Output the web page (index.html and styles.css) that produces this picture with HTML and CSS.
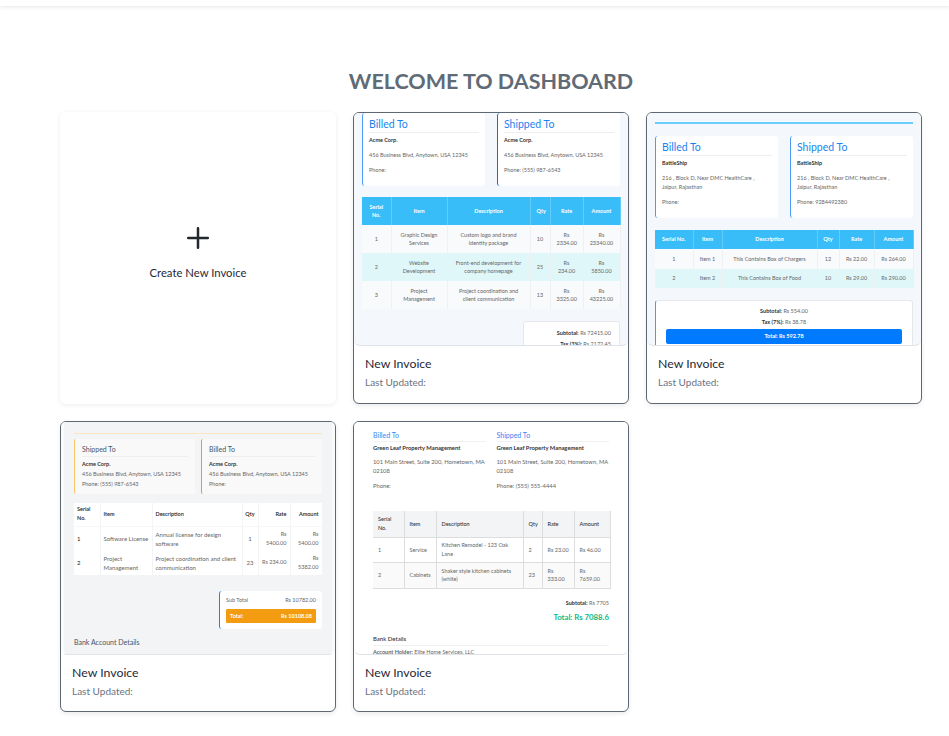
FILE: index.html
```html
<!DOCTYPE html>
<html lang="en">
<head>
  <meta charset="UTF-8">
  <meta name="viewport" content="width=device-width, initial-scale=1.0">
  <title>Dashboard</title>
  <link rel="stylesheet" href="styles.css">
</head>
<body>

  <div class="topbar"></div>

  <main class="dashboard">
    <h1 class="title">WELCOME TO DASHBOARD</h1>

    <div class="grid">

      <a class="create-card">
        <svg class="plus" width="22" height="22" viewBox="0 0 22 22" fill="none" stroke="#23272e" stroke-width="2.5" stroke-linecap="round"><path d="M11 1.2v19.6M1.2 11h19.6"/></svg>
        <span>Create New Invoice</span>
      </a>

      <!-- template 1 -->
      <div class="card">
        <div class="preview t1">
          <div class="parties">
            <div class="party">
              <h3>Billed To</h3>
              <p><b>Acme Corp.</b></p>
              <p>456 Business Blvd, Anytown, USA 12345</p>
              <p>Phone:</p>
            </div>
            <div class="party dark">
              <h3>Shipped To</h3>
              <p><b>Acme Corp.</b></p>
              <p>456 Business Blvd, Anytown, USA 12345</p>
              <p>Phone: (555) 987-6543</p>
            </div>
          </div>
          <table class="items">
            <colgroup><col class="c1"><col class="c2"><col class="c3"><col class="c4"><col class="c5"><col class="c6"></colgroup>
            <thead>
              <tr><th>Serial No.</th><th>Item</th><th>Description</th><th>Qty</th><th>Rate</th><th>Amount</th></tr>
            </thead>
            <tbody>
              <tr><td>1</td><td>Graphic Design Services</td><td>Custom logo and brand identity package</td><td>10</td><td>Rs 2334.00</td><td>Rs 23340.00</td></tr>
              <tr><td>2</td><td>Website Development</td><td>Front-end development for company homepage</td><td>25</td><td>Rs 234.00</td><td>Rs 5850.00</td></tr>
              <tr><td>3</td><td>Project Management</td><td>Project coordination and client communication</td><td>13</td><td>Rs 3325.00</td><td>Rs 43225.00</td></tr>
            </tbody>
          </table>
          <div class="totals">
            <p><b>Subtotal:</b> Rs 72415.00</p>
            <p><b>Tax (3%):</b> Rs 2172.45</p>
          </div>
        </div>
        <div class="card-info">
          <h4>New Invoice</h4>
          <p>Last Updated:</p>
        </div>
      </div>

      <!-- template 2 -->
      <div class="card">
        <div class="preview t2">
          <div class="rule"></div>
          <div class="parties">
            <div class="party">
              <h3>Billed To</h3>
              <p><b>BattleShip</b></p>
              <p>216 , Block D, Near DMC HealthCare , Jaipur, Rajasthan</p>
              <p>Phone:</p>
            </div>
            <div class="party">
              <h3>Shipped To</h3>
              <p><b>BattleShip</b></p>
              <p>216 , Block D, Near DMC HealthCare , Jaipur, Rajasthan</p>
              <p>Phone: 9284492380</p>
            </div>
          </div>
          <table class="items">
            <colgroup><col class="c1"><col class="c2"><col class="c3"><col class="c4"><col class="c5"><col class="c6"></colgroup>
            <thead>
              <tr><th>Serial No.</th><th>Item</th><th>Description</th><th>Qty</th><th>Rate</th><th>Amount</th></tr>
            </thead>
            <tbody>
              <tr><td>1</td><td>Item 1</td><td>This Contains Box of Chargers</td><td>12</td><td>Rs 22.00</td><td>Rs 264.00</td></tr>
              <tr><td>2</td><td>Item 2</td><td>This Contains Box of Food</td><td>10</td><td>Rs 29.00</td><td>Rs 290.00</td></tr>
            </tbody>
          </table>
          <div class="totals">
            <p><b>Subtotal:</b> Rs 554.00</p>
            <p><b>Tax (7%):</b> Rs 38.78</p>
            <div class="grand">Total: Rs 592.78</div>
          </div>
        </div>
        <div class="card-info">
          <h4>New Invoice</h4>
          <p>Last Updated:</p>
        </div>
      </div>

      <!-- template 3 -->
      <div class="card">
        <div class="preview t3">
          <div class="rule"></div>
          <div class="parties">
            <div class="party light">
              <h3>Shipped To</h3>
              <p><b>Acme Corp.</b></p>
              <p>456 Business Blvd, Anytown, USA 12345</p>
              <p>Phone: (555) 987-6543</p>
            </div>
            <div class="party">
              <h3>Billed To</h3>
              <p><b>Acme Corp.</b></p>
              <p>456 Business Blvd, Anytown, USA 12345</p>
              <p>Phone:</p>
            </div>
          </div>
          <table class="items">
            <colgroup><col class="c1"><col class="c2"><col class="c3"><col class="c4"><col class="c5"><col class="c6"></colgroup>
            <thead>
              <tr><th>Serial No.</th><th>Item</th><th>Description</th><th>Qty</th><th>Rate</th><th>Amount</th></tr>
            </thead>
            <tbody>
              <tr><td>1</td><td>Software License</td><td>Annual license for design software</td><td>1</td><td>Rs 5400.00</td><td>Rs 5400.00</td></tr>
              <tr><td>2</td><td>Project Management</td><td>Project coordination and client communication</td><td>23</td><td>Rs 234.00</td><td>Rs 5382.00</td></tr>
            </tbody>
          </table>
          <div class="totals">
            <div class="sub"><span>Sub Total</span><span>Rs 10782.00</span></div>
            <div class="grand"><span>Total:</span><span>Rs 10108.08</span></div>
          </div>
          <div class="bank">Bank Account Details</div>
        </div>
        <div class="card-info">
          <h4>New Invoice</h4>
          <p>Last Updated:</p>
        </div>
      </div>

      <!-- template 4 -->
      <div class="card">
        <div class="preview t4">
          <div class="parties">
            <div class="party">
              <h3>Billed To</h3>
              <p><b>Green Leaf Property Management</b></p>
              <p>101 Main Street, Suite 200, Hometown, MA 02108</p>
              <p>Phone:</p>
            </div>
            <div class="party">
              <h3>Shipped To</h3>
              <p><b>Green Leaf Property Management</b></p>
              <p>101 Main Street, Suite 200, Hometown, MA 02108</p>
              <p>Phone: (555) 555-4444</p>
            </div>
          </div>
          <table class="items">
            <colgroup><col class="c1"><col class="c2"><col class="c3"><col class="c4"><col class="c5"><col class="c6"></colgroup>
            <thead>
              <tr><th>Serial No.</th><th>Item</th><th>Description</th><th>Qty</th><th>Rate</th><th>Amount</th></tr>
            </thead>
            <tbody>
              <tr><td>1</td><td>Service</td><td>Kitchen Remodel - 123 Oak Lane</td><td>2</td><td>Rs 23.00</td><td>Rs 46.00</td></tr>
              <tr><td>2</td><td>Cabinets</td><td>Shaker style kitchen cabinets (white)</td><td>23</td><td>Rs 333.00</td><td>Rs 7659.00</td></tr>
            </tbody>
          </table>
          <div class="totals">
            <p><b>Subtotal:</b> Rs 7705</p>
            <p class="grand">Total: Rs 7088.6</p>
          </div>
          <div class="bank">
            <h5>Bank Details</h5>
            <p><b>Account Holder:</b> Elite Home Services, LLC</p>
          </div>
        </div>
        <div class="card-info">
          <h4>New Invoice</h4>
          <p>Last Updated:</p>
        </div>
      </div>

    </div>
  </main>

</body>
</html>
```

FILE: styles.css
```css
* {
  box-sizing: border-box;
}

body {
  margin: 0;
  background-color: #fff;
  font-family: Lato, "Noto Sans", sans-serif;
  color: #1f2937;
}

h1, h3, h4, h5, p {
  margin: 0;
}

.topbar {
  height: 6px;
  background-color: #fff;
  box-shadow: 0 1px 4px rgba(0, 0, 0, 0.1);
}

.dashboard {
  padding: 0 27px 24px 60px;
}

.title {
  margin-top: 61px;
  height: 45px;
  text-align: center;
  font-size: 21.5px;
  line-height: 28px;
  font-weight: 700;
  color: #5f6b76;
}

.grid {
  display: grid;
  grid-template-columns: repeat(3, 276px);
  grid-template-rows: 292px 291px;
  gap: 17px;
}

.create-card {
  display: flex;
  flex-direction: column;
  align-items: center;
  justify-content: center;
  padding-bottom: 9px;
  border-radius: 6px;
  background-color: #fff;
  box-shadow: 0 1px 5px rgba(0, 0, 0, 0.08);
  font-size: 11.3px;
  line-height: 14px;
  color: #1f2937;
}

.plus {
  margin-bottom: 17px;
}

.card {
  display: flex;
  flex-direction: column;
  border: 1px solid #5f6773;
  border-radius: 6px;
  background-color: #fff;
  box-shadow: 0 2px 5px rgba(0, 0, 0, 0.08);
  overflow: hidden;
}

.preview {
  height: 233px;
  flex-shrink: 0;
  overflow: hidden;
  border-bottom: 1px solid #dfe3e8;
  border-radius: 0 0 6px 6px;
  font-size: 5.5px;
  line-height: 9px;
  color: #666;
}

.card-info {
  padding: 10px 11px 0;
}

.card-info h4 {
  font-size: 12.3px;
  line-height: 15px;
  font-weight: 400;
  color: #1f2937;
}

.card-info p {
  margin-top: 4px;
  font-size: 10px;
  line-height: 14px;
  color: #6b7280;
}

.parties {
  display: flex;
}

.party p b {
  color: #333;
}

.items {
  width: 100%;
  table-layout: fixed;
  border-collapse: collapse;
}

.items th,
.items td {
  text-align: center;
  font-size: 5.5px;
  line-height: 8.4px;
}

/* template 1 */
.t1 {
  padding: 0 8px;
  background-color: #f4f7fb;
}

.t1 .parties,
.t2 .parties {
  gap: 12px;
}

.t1 .party,
.t2 .party {
  flex: 1;
  height: 73px;
  padding: 5px 6px;
  border-left: 1px solid #4a9bf5;
  border-radius: 3px;
  background-color: #fff;
}

.t1 .party.dark {
  border-left-color: #0d6fd8;
}

.t1 h3,
.t2 h3 {
  padding-bottom: 1px;
  border-bottom: 1px solid #eee;
  margin-bottom: 2.5px;
  font-size: 10.5px;
  line-height: 13px;
  font-weight: 400;
  color: #1a84ee;
}

.t1 .party p,
.t2 .party p {
  margin-bottom: 6px;
}

.t1 .items {
  margin-top: 11px;
}

.t1 .c1 { width: 29px; }
.t1 .c2 { width: 56px; }
.t1 .c3 { width: 83px; }
.t1 .c4 { width: 20px; }
.t1 .c5 { width: 33px; }
.t1 .c6 { width: 37px; }

.t1 th,
.t1 td {
  padding: 0 6px;
}

.t1 th,
.t2 th {
  background-color: #38bdf8;
  border-right: 1px solid #62ccfa;
  color: #fff;
  font-weight: 700;
}

.t1 th {
  height: 28px;
}

.t1 td,
.t2 td {
  border-right: 1px solid #eef1f4;
  background-color: #f8fafc;
}

.t1 td {
  height: 28px;
}

.t1 tbody tr:nth-child(2) td,
.t2 tbody tr:nth-child(2) td {
  background-color: #e0f7fa;
}

.t1 .totals {
  width: 97px;
  margin: 12px 0 0 auto;
  padding: 6px 8px;
  border: 1px solid #e5e7eb;
  border-radius: 3px;
  background-color: #fff;
  text-align: right;
  line-height: 10.5px;
}

.t1 .totals b,
.t2 .totals b {
  color: #333;
}

/* template 2 */
.t2 {
  padding: 9px 8px 0;
  background-color: #f4f7fb;
}

.rule {
  height: 2px;
  background-color: #6ccdfb;
}

.t2 .parties {
  margin-top: 12px;
}

.t2 .party {
  height: 82px;
}

.t2 .party p {
  padding-right: 14px;
}

.t2 .items {
  margin-top: 12px;
}

.t2 .c1 { width: 38px; }
.t2 .c2 { width: 29px; }
.t2 .c3 { width: 95px; }
.t2 .c4 { width: 22px; }
.t2 .c5 { width: 35px; }
.t2 .c6 { width: 39px; }

.t2 th {
  height: 19px;
}

.t2 td {
  height: 19.5px;
}

.t2 .totals {
  margin-top: 12px;
  height: 60px;
  padding: 5px 10px;
  border: 1px solid #e5e7eb;
  border-left: 1px solid #4a9bf5;
  border-radius: 3px;
  background-color: #fff;
  text-align: center;
  line-height: 11px;
}

.t2 .grand {
  height: 15px;
  margin-top: 1px;
  border-radius: 2px;
  background-color: #007bff;
  color: #fff;
  font-weight: 700;
  line-height: 15px;
}

/* template 3 */
.t3 {
  padding: 11px 10px 0;
  border-left: 3px solid #fafafa;
  border-right: 3px solid #fafafa;
  background-color: #f3f4f5;
}

.t3 .rule {
  height: 1px;
  background-color: #fde4c0;
}

.t3 .parties {
  gap: 6px;
  margin-top: 5px;
}

.t3 .party {
  flex: 1;
  height: 55px;
  padding: 6px 7px 0;
  border-left: 1px solid #f39c12;
  border-radius: 2px;
  background-color: #f9f9f9;
  line-height: 10px;
}

.t3 .party.light {
  border-left-color: #fbc567;
}

.t3 h3 {
  padding-bottom: 2px;
  border-bottom: 1px solid #eee;
  margin-bottom: 2px;
  font-size: 7px;
  line-height: 9px;
  font-weight: 400;
  color: #4a5568;
}

.t3 .items {
  margin-top: 9px;
  background-color: #fff;
}

.t3 .c1 { width: 26px; }
.t3 .c2 { width: 52px; }
.t3 .c3 { width: 90px; }
.t3 .c4 { width: 16px; }
.t3 .c5 { width: 32px; }
.t3 .c6 { width: 32px; }

.t3 th,
.t3 td {
  padding: 0 3px;
  border-right: 1px solid #f3f4f5;
  text-align: left;
  line-height: 9px;
}

.t3 th {
  height: 23px;
  border-bottom: 1px solid #f7f7f7;
  color: #222;
  font-weight: 600;
}

.t3 td {
  height: 24.5px;
  font-size: 6px;
}

.t3 td:first-child {
  color: #222;
}

.t3 th:nth-child(n+5),
.t3 td:nth-child(n+5) {
  text-align: right;
  font-size: 5.5px;
}

.t3 th:nth-child(4),
.t3 td:nth-child(4) {
  padding: 0;
  text-align: center;
}

.t3 .totals {
  width: 103px;
  height: 38px;
  margin: 16px 0 0 auto;
  padding: 5px 6px;
  border-left: 1px solid #1a84ee;
  border-radius: 3px;
  background-color: #fff;
}

.t3 .sub,
.t3 .grand {
  display: flex;
  justify-content: space-between;
}

.t3 .grand {
  height: 14px;
  margin-top: 4px;
  padding: 0 4px;
  border-radius: 1px;
  background-color: #f39c12;
  color: #fff;
  font-weight: 700;
  line-height: 14px;
}

.t3 .bank {
  margin-top: 8.5px;
  font-size: 7px;
  color: #4a5568;
}

/* template 4 */
.t4 {
  padding: 9px 19px 0;
  background-color: #fff;
}

.t4 .parties {
  gap: 11px;
}

.t4 .party {
  flex: 1;
  height: 69px;
  font-size: 5.8px;
}

.t4 h3 {
  padding-bottom: 1px;
  border-bottom: 1px solid #f1f1f1;
  margin-bottom: 0.5px;
  font-size: 7px;
  line-height: 9px;
  font-weight: 400;
  color: #3b82f6;
}

.t4 .party p {
  margin-bottom: 5.6px;
}

.t4 .items {
  width: 237px;
  margin-top: 11px;
}

.t4 .c1 { width: 31px; }
.t4 .c2 { width: 32px; }
.t4 .c3 { width: 87px; }
.t4 .c4 { width: 19px; }
.t4 .c5 { width: 32px; }
.t4 .c6 { width: 36px; }

.t4 th,
.t4 td {
  padding: 0 4px 0 5px;
  border: 1px solid #ddd;
  border-width: 0 1px 1px 0;
  text-align: left;
}

.t4 th {
  height: 26px;
  background-color: #f3f4f6;
  color: #333;
  font-weight: 500;
}

.t4 td {
  height: 25.5px;
}

.t4 tbody tr:nth-child(2) td {
  background-color: #fafafa;
}

.t4 .totals {
  margin-top: 10px;
  text-align: right;
}

.t4 .totals b {
  color: #333;
}

.t4 .grand {
  margin-top: 4px;
  font-size: 7.8px;
  line-height: 11px;
  font-weight: 700;
  color: #10b981;
}

.t4 .bank {
  margin-top: 11px;
}

.t4 h5 {
  padding-bottom: 2px;
  border-bottom: 1px solid #f1f1f1;
  margin-bottom: 2px;
  font-size: 6px;
  line-height: 9px;
  font-weight: 500;
  color: #333;
}
```
